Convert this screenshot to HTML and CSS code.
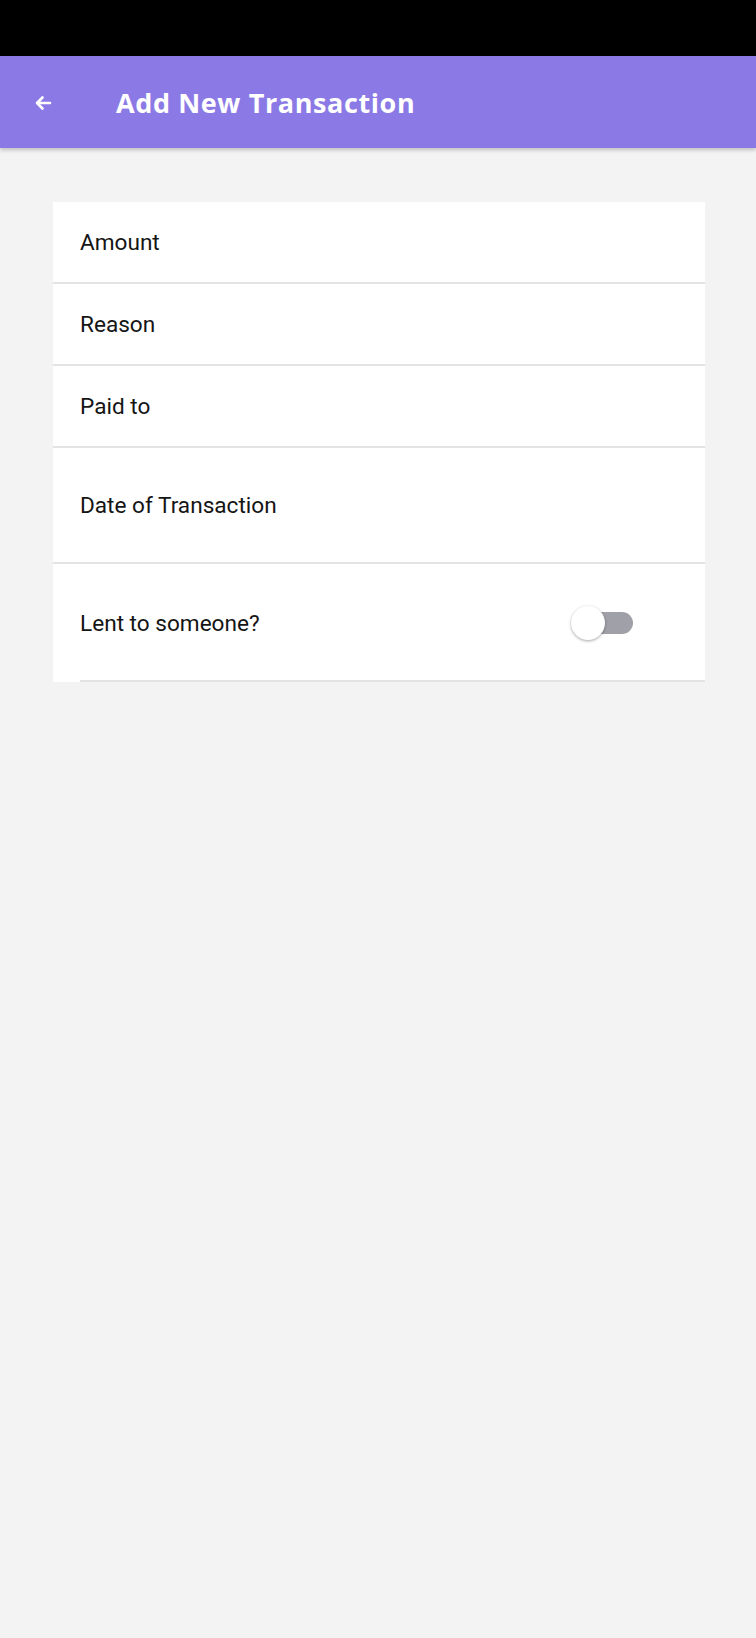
FILE: index.html
```html
<!DOCTYPE html>
<html>
<head>
<meta charset="utf-8">
<link rel="stylesheet" href="styles.css">
</head>
<body>
<div class="status"></div>
<header class="appbar">
  <svg class="back" width="18" height="16" viewBox="0 0 18 16"><path d="M16 8H3M8.5 2.5L3 8l5.5 5.5" fill="none" stroke="#fff" stroke-width="2.6" stroke-linecap="round" stroke-linejoin="round"/></svg>
  <h1 class="title">Add New Transaction</h1>
</header>
<main class="content">
  <section class="card">
    <div class="row">Amount</div>
    <div class="row">Reason</div>
    <div class="row">Paid to</div>
    <div class="row tall">Date of Transaction</div>
    <div class="row tall last">
      <span>Lent to someone?</span>
      <span class="switch"><span class="track"></span><span class="thumb"></span></span>
    </div>
  </section>
</main>
</body>
</html>
```
FILE: styles.css
```css
html, body {
  margin: 0;
  padding: 0;
  background: #f3f3f4;
  font-family: Roboto, "Liberation Sans", sans-serif;
}
.status {
  height: 56px;
  background: #000;
}
.appbar {
  height: 92px;
  background: #8b7ae5;
  display: flex;
  align-items: center;
  box-shadow: 0 2px 4px rgba(0,0,0,0.22);
  position: relative;
}
.back {
  margin-left: 34px;
  margin-top: 2px;
}
.title {
  margin: 0 0 0 64px;
  color: #fff;
  font-family: "Open Sans", Lato, sans-serif;
  font-weight: 700;
  font-size: 27px;
  letter-spacing: 0.6px;
}
.content {
  padding: 54px 51px 0 53px;
}
.card {
  background: #fff;
  width: 652px;
}
.row {
  height: 80px;
  border-bottom: 2px solid #e3e3e3;
  display: flex;
  align-items: center;
  padding-left: 27px;
  font-size: 22.6px;
  color: #151515;
}
.row.tall {
  height: 114px;
}
.row.last {
  height: 118px;
  border-bottom: none;
  position: relative;
  justify-content: space-between;
  padding-right: 72px;
}
.row.last::after {
  content: "";
  position: absolute;
  left: 27px;
  right: 0;
  bottom: 0;
  height: 2px;
  background: #e3e3e3;
}
.switch {
  position: relative;
  width: 62px;
  height: 34px;
  display: inline-block;
}
.track {
  position: absolute;
  left: 4px;
  right: 0;
  top: 6px;
  height: 22px;
  border-radius: 11px;
  background: #a0a0a8;
}
.thumb {
  position: absolute;
  left: 0;
  top: 0;
  width: 34px;
  height: 34px;
  border-radius: 50%;
  background: #fff;
  box-shadow: 0 1px 3px rgba(0,0,0,0.35);
}
```
